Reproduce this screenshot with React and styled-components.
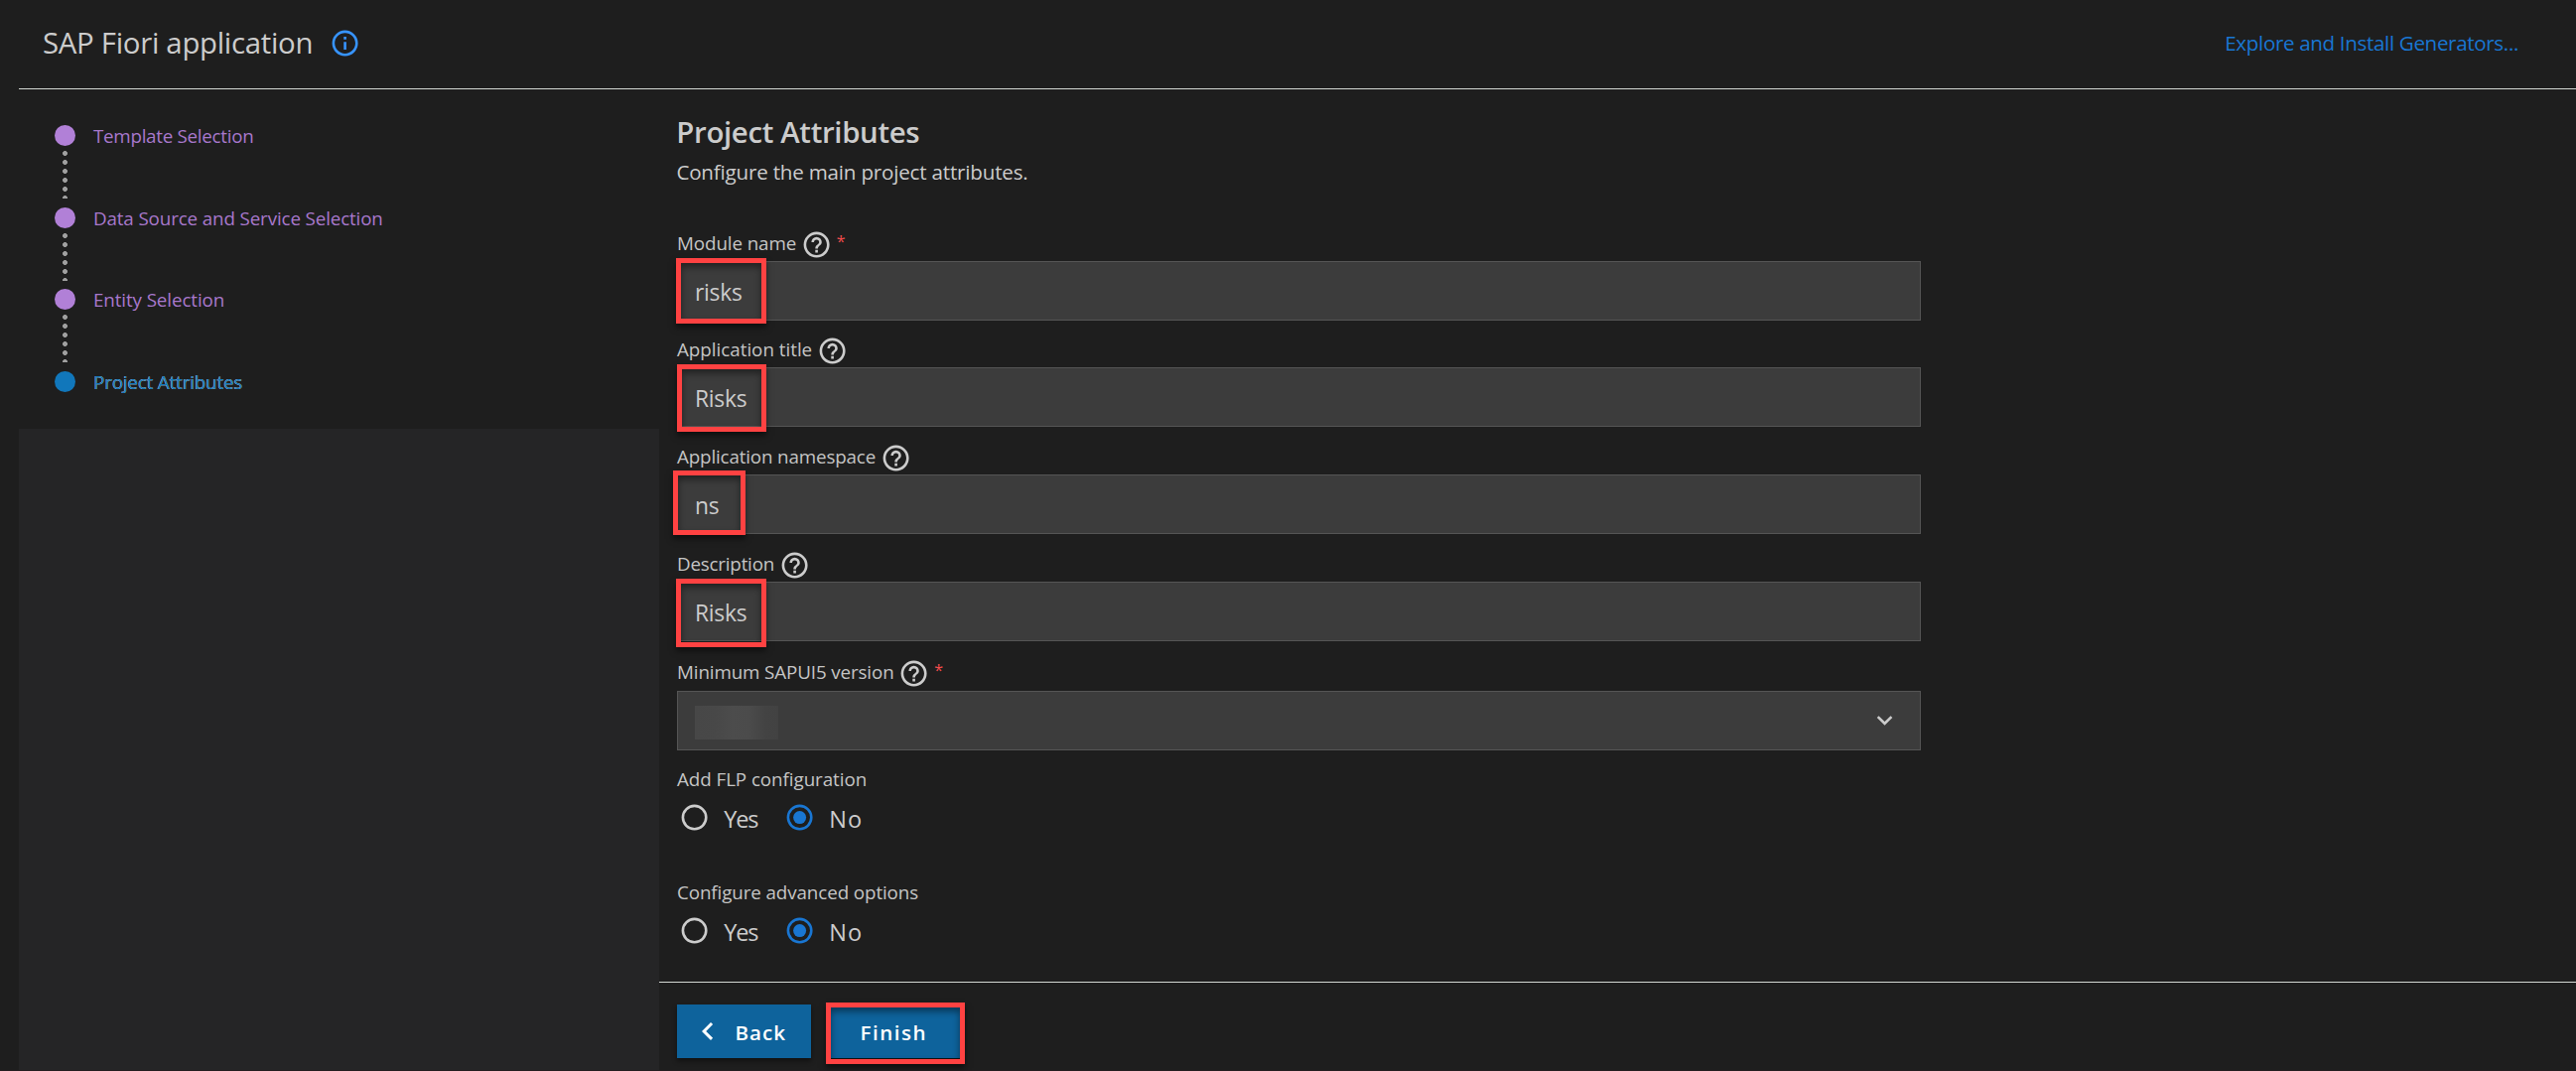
import React from "react";
import styled, { createGlobalStyle, css } from "styled-components";

const GlobalStyle = createGlobalStyle`
  *, *::before, *::after { box-sizing: border-box; }
  body {
    margin: 0;
    background: #1e1e1e;
    color: #cccccc;
    font-family: "Open Sans", "Noto Sans", sans-serif;
    overflow: hidden;
  }
`;

const Page = styled.div`
  display: flex;
  flex-direction: column;
  width: 100%;
  height: 1079px;
  padding-left: 19px;
  border-bottom: 1px solid #231d1f;
  background: #1e1e1e;
`;

const Header = styled.header`
  display: flex;
  align-items: center;
  flex: none;
  height: 90px;
  padding: 0 58px 3px 24px;
  border-bottom: 1px solid #d4d8d4;
`;

const Title = styled.h1`
  margin: 0;
  font-size: 29.4px;
  font-weight: 400;
  line-height: 86px;
  letter-spacing: -0.3px;
`;

const Icon = styled.svg`
  display: block;
  flex: none;
  width: ${(p) => p.$size || 31.2}px;
  height: ${(p) => p.$size || 31.2}px;
  fill: ${(p) => p.$color || "currentColor"};
`;

const InfoIcon = styled(Icon)`
  margin: 1px 0 0 17px;
`;

const GeneratorsLink = styled.a`
  margin-left: auto;
  color: #1976d2;
  font-size: 20.6px;
  letter-spacing: -0.35px;
  white-space: nowrap;
`;

const Body = styled.div`
  display: flex;
  flex: 1;
  min-height: 0;
`;

const Sidebar = styled.aside`
  display: flex;
  flex-direction: column;
  flex: none;
  width: 645px;
  background: #252526;
`;

const StepList = styled.ol`
  flex: none;
  height: 342px;
  margin: 0;
  padding: 36px 0 0 36px;
  list-style: none;
  background: #1e1e1e;
`;

const Step = styled.li`
  display: grid;
  grid-template-columns: 21px auto;
  grid-template-rows: 21px 48px;
  column-gap: 18px;
  row-gap: 5px;
  height: 82.67px;
`;

const Bullet = styled.span`
  width: 21px;
  height: 21px;
  border-radius: 50%;
  background: ${(p) => (p.$current ? "#1177bb" : "#b180d7")};
`;

const StepLabel = styled.span`
  font-size: 18.8px;
  line-height: 22px;
  letter-spacing: ${(p) => p.$track}px;
  white-space: nowrap;
  color: #a878cc;
  ${(p) =>
    p.$current &&
    css`
      color: #1177bb;
      text-shadow: 0 0 0 #ffffff;
    `}
`;

const Dots = styled.span`
  justify-self: center;
  width: 5px;
  height: 48px;
  background: radial-gradient(circle at 2.5px 2.5px, #a0a0a0 2.1px, transparent 2.8px) 0 0 / 5px 9px repeat-y;
`;

const Main = styled.main`
  display: flex;
  flex-direction: column;
  flex: 1;
  min-width: 0;
  background: #1e1e1e;
`;

const Form = styled.div`
  flex: 1;
  min-height: 0;
  padding: 23px 0 0 18px;
`;

const Heading = styled.h2`
  margin: 0 0 0 -0.7px;
  font-size: 29.4px;
  font-weight: 600;
  line-height: 40px;
  letter-spacing: -0.34px;
`;

const Subtitle = styled.p`
  margin: 6px 0 0 -0.6px;
  font-size: 20.6px;
  line-height: 28px;
  letter-spacing: -0.2px;
`;

const Field = styled.div`
  width: 1253px;
  margin-top: ${(p) => p.$gap}px;
`;

const LabelRow = styled.div`
  display: flex;
  align-items: center;
  height: 24px;
  margin-bottom: ${(p) => p.$below}px;
  font-size: 18.8px;
  line-height: 24px;
  letter-spacing: ${(p) => p.$track}px;
  color: #c5c5c5;
`;

const HelpIcon = styled(Icon)`
  margin: -4px 0 -8px 4.5px;
`;

const Required = styled.span`
  margin-left: 5px;
  padding-bottom: 4px;
  font-size: 16px;
  color: #f14c4c;
`;

const Control = styled.div`
  position: relative;
  display: flex;
  align-items: center;
  height: 60px;
  padding: 0 20px 0 17px;
  border: 1px solid #555555;
  background: #3c3c3c;
`;

const Value = styled.span`
  padding-top: 4px;
  font-size: 22.8px;
  line-height: 30px;
  letter-spacing: -0.25px;
`;

const Redacted = styled.span`
  width: 84px;
  height: 34px;
  margin-top: 4px;
  background: linear-gradient(90deg, #474747 0%, #484848 25%, #4c4c4c 45%, #4b4b4b 65%, #434343 85%, #424242 100%);
`;

const ChevronDown = styled(Icon)`
  margin-left: auto;
`;

const Highlight = styled.span`
  position: absolute;
  left: ${(p) => p.$x}px;
  top: ${(p) => p.$y}px;
  width: ${(p) => p.$w}px;
  height: ${(p) => p.$h}px;
  border: 5px solid #ff4242;
  box-shadow: 0 4px 6px rgba(0, 0, 0, 0.5), inset 0 4px 7px rgba(0, 0, 0, 0.45);
  pointer-events: none;
`;

const RadioGroup = styled.div`
  display: flex;
  height: 36px;
  padding-left: 2px;
`;

const Option = styled.label`
  display: flex;
  align-items: center;
  gap: 14px;
  width: 106px;
  font-size: 23.5px;
  line-height: 34px;
  letter-spacing: ${(p) => p.$track}px;
`;

const OptionText = styled.span`
  padding-top: 2px;
`;

const Footer = styled.footer`
  display: flex;
  align-items: flex-start;
  flex: none;
  gap: 19px;
  height: 89px;
  padding: 22px 0 0 18px;
  border-top: 1px solid #d4d8d4;
`;

const Button = styled.button`
  position: relative;
  display: flex;
  align-items: center;
  width: ${(p) => p.$width}px;
  height: 54px;
  padding: 0 0 0 ${(p) => p.$inset}px;
  border: 0;
  background: #0e639c;
  color: #ffffff;
  font: 600 20.6px/30px "Open Sans", "Noto Sans", sans-serif;
  letter-spacing: ${(p) => p.$track}px;
  box-shadow: 0 3px 5px rgba(0, 0, 0, 0.45);
`;

const ButtonText = styled.span`
  padding-top: 2px;
  margin-left: ${(p) => p.$indent || 0}px;
`;

const PATHS = {
  info: "M11,9H13V7H11M12,20C7.59,20 4,16.41 4,12C4,7.59 7.59,4 12,4C16.41,4 20,7.59 20,12C20,16.41 16.41,20 12,20M12,2A10,10 0 0,0 2,12A10,10 0 0,0 12,22A10,10 0 0,0 22,12A10,10 0 0,0 12,2M11,17H13V11H11V17Z",
  help: "M11,18H13V16H11V18M12,2A10,10 0 0,0 2,12A10,10 0 0,0 12,22A10,10 0 0,0 22,12A10,10 0 0,0 12,2M12,20C7.59,20 4,16.41 4,12C4,7.59 7.59,4 12,4C16.41,4 20,7.59 20,12C20,16.41 16.41,20 12,20M12,6A4,4 0 0,0 8,10H10A2,2 0 0,1 12,8A2,2 0 0,1 14,10C14,12 11,11.75 11,15H13C13,12.75 16,12.5 16,10A4,4 0 0,0 12,6Z",
  down: "M7.41,8.58L12,13.17L16.59,8.58L18,10L12,16L6,10L7.41,8.58Z",
  left: "M15.41,16.58L10.83,12L15.41,7.41L14,6L8,12L14,18L15.41,16.58Z",
  ring: "M12,20A8,8 0 0,1 4,12A8,8 0 0,1 12,4A8,8 0 0,1 20,12A8,8 0 0,1 12,20M12,2A10,10 0 0,0 2,12A10,10 0 0,0 12,22A10,10 0 0,0 22,12A10,10 0 0,0 12,2Z",
};

const steps = [
  { label: "Template Selection", track: -0.28 },
  { label: "Data Source and Service Selection", track: -0.13 },
  { label: "Entity Selection", track: -0.1 },
  { label: "Project Attributes", track: -0.16, current: true },
];

const fields = [
  { label: "Module name", value: "risks", required: true, gap: 45.5, below: 6.5, track: -0.1, mark: [-2, -4, 91, 66] },
  { label: "Application title", value: "Risks", gap: 17, below: 6, track: -0.01, mark: [-1, -4, 90, 68] },
  { label: "Application namespace", value: "ns", gap: 18, below: 6, track: -0.15, mark: [-5, -5, 73, 65] },
  { label: "Description", value: "Risks", gap: 18, below: 6, track: -0.2, mark: [-2, -4, 91, 69] },
];

const questions = [
  { label: "Add FLP configuration", gap: 17, track: -0.06 },
  { label: "Configure advanced options", gap: 45, track: -0.1 },
];

function FieldLabel({ label, track, below, required }) {
  return (
    <LabelRow $track={track} $below={below}>
      {label}
      <HelpIcon viewBox="0 0 24 24" $color="#cccccc">
        <path d={PATHS.help} />
      </HelpIcon>
      {required && <Required>*</Required>}
    </LabelRow>
  );
}

function Radio({ label, checked, track }) {
  return (
    <Option $track={track}>
      <Icon viewBox="0 0 24 24" $color={checked ? "#1976d2" : "#cccccc"}>
        <path d={PATHS.ring} />
        {checked && <circle cx="12" cy="12" r="5" />}
      </Icon>
      <OptionText>{label}</OptionText>
    </Option>
  );
}

export default function App() {
  return (
    <>
      <GlobalStyle />
      <Page>
        <Header>
          <Title>SAP Fiori application</Title>
          <InfoIcon viewBox="0 0 24 24" $color="#3794ff">
            <path d={PATHS.info} />
          </InfoIcon>
          <GeneratorsLink>Explore and Install Generators...</GeneratorsLink>
        </Header>
        <Body>
          <Sidebar>
            <StepList>
              {steps.map((s) => (
                <Step key={s.label}>
                  <Bullet $current={s.current} />
                  <StepLabel $current={s.current} $track={s.track}>
                    {s.label}
                  </StepLabel>
                  {!s.current && <Dots />}
                </Step>
              ))}
            </StepList>
          </Sidebar>
          <Main>
            <Form>
              <Heading>Project Attributes</Heading>
              <Subtitle>Configure the main project attributes.</Subtitle>
              {fields.map((f) => (
                <Field key={f.label} $gap={f.gap}>
                  <FieldLabel label={f.label} track={f.track} below={f.below} required={f.required} />
                  <Control>
                    <Value>{f.value}</Value>
                    <Highlight $x={f.mark[0]} $y={f.mark[1]} $w={f.mark[2]} $h={f.mark[3]} />
                  </Control>
                </Field>
              ))}
              <Field $gap={19}>
                <FieldLabel label="Minimum SAPUI5 version" track={-0.12} below={7} required />
                <Control>
                  <Redacted />
                  <ChevronDown viewBox="0 0 24 24">
                    <path d={PATHS.down} />
                  </ChevronDown>
                </Control>
              </Field>
              {questions.map((q) => (
                <Field key={q.label} $gap={q.gap}>
                  <LabelRow $track={q.track} $below={9}>
                    {q.label}
                  </LabelRow>
                  <RadioGroup>
                    <Radio label="Yes" track={-1.1} />
                    <Radio label="No" track={1} checked />
                  </RadioGroup>
                </Field>
              ))}
            </Form>
            <Footer>
              <Button $width={135} $track={1} $inset={13}>
                <Icon viewBox="0 0 24 24" $size={36}>
                  <path d={PATHS.left} />
                </Icon>
                <ButtonText $indent={9.5}>Back</ButtonText>
              </Button>
              <Button $width={132} $track={1.5} $inset={30.5}>
                <ButtonText>Finish</ButtonText>
                <Highlight $x={-4} $y={-2} $w={140} $h={62} />
              </Button>
            </Footer>
          </Main>
        </Body>
      </Page>
    </>
  );
}
